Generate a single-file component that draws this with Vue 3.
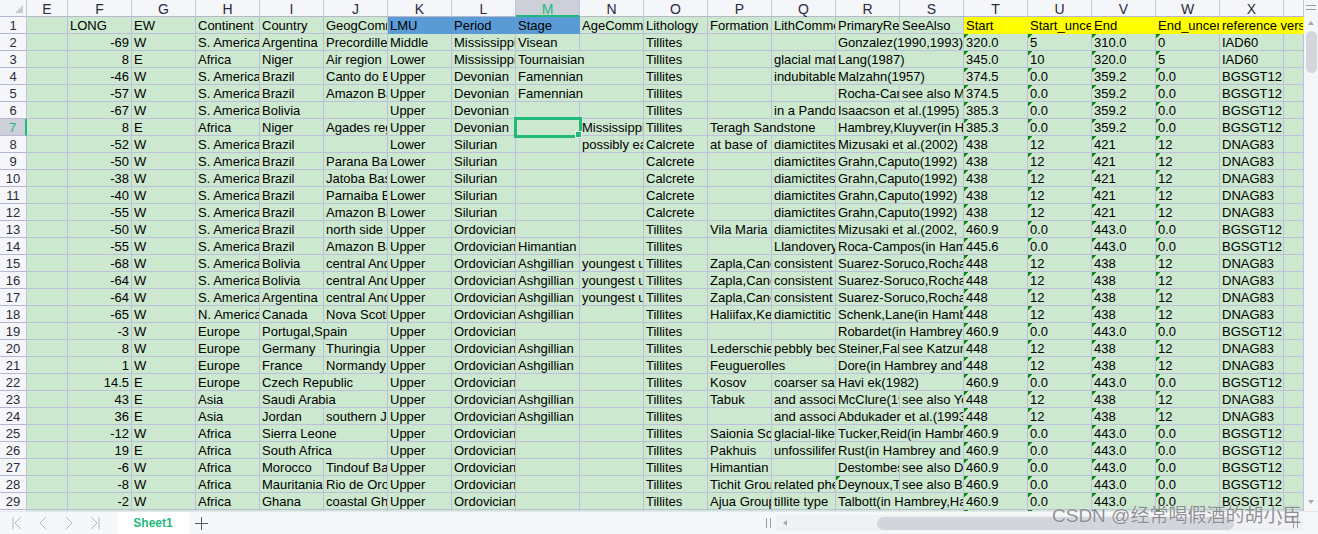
<script setup>
const letters = 'EFGHIJKLMNOPQRSTUVWX'.split('')

// F..X, a trailing > means the text runs on over the next (empty) cell
const data = [
  'LONG|EW|Continent|Country|GeogComments|LMU|Period|Stage|AgeComments|Lithology|Formation|LithComments|PrimaryRef|SeeAlso|Start|Start_uncertainty|End|End_uncertainty|reference version>',
  '-69|W|S. America|Argentina|Precordillera|Middle|Mississippian|Visean||Tillites|||Gonzalez(1990,1993)>||320.0|5|310.0|0|IAD60',
  '8|E|Africa|Niger|Air region|Lower|Mississippian|Tournaisian>||Tillites||glacial material|Lang(1987)>||345.0|10|320.0|5|IAD60',
  '-46|W|S. America|Brazil|Canto do Brasil|Upper|Devonian|Famennian>||Tillites||indubitable|Malzahn(1957)>||374.5|0.0|359.2|0.0|BGSGT12',
  '-57|W|S. America|Brazil|Amazon Basin|Upper|Devonian|Famennian>||Tillites|||Rocha-Campos|see also Martin|374.5|0.0|359.2|0.0|BGSGT12',
  '-67|W|S. America|Bolivia||Upper|Devonian|||Tillites||in a Pandora|Isaacson et al.(1995)>||385.3|0.0|359.2|0.0|BGSGT12',
  '8|E|Africa|Niger|Agades region|Upper|Devonian||Mississippian|Tillites|Teragh Sandstone>||Hambrey,Kluyver(in Hambrey)>||385.3|0.0|359.2|0.0|BGSGT12',
  '-52|W|S. America|Brazil||Lower|Silurian||possibly early|Calcrete|at base of|diamictites|Mizusaki et al.(2002)>||438|12|421|12|DNAG83',
  '-50|W|S. America|Brazil|Parana Basin|Lower|Silurian|||Calcrete||diamictites|Grahn,Caputo(1992)>||438|12|421|12|DNAG83',
  '-38|W|S. America|Brazil|Jatoba Basin|Lower|Silurian|||Calcrete||diamictites|Grahn,Caputo(1992)>||438|12|421|12|DNAG83',
  '-40|W|S. America|Brazil|Parnaiba Basin|Lower|Silurian|||Calcrete||diamictites|Grahn,Caputo(1992)>||438|12|421|12|DNAG83',
  '-55|W|S. America|Brazil|Amazon Basin|Lower|Silurian|||Calcrete||diamictites|Grahn,Caputo(1992)>||438|12|421|12|DNAG83',
  '-50|W|S. America|Brazil|north side of|Upper|Ordovician|||Tillites|Vila Maria|diamictites|Mizusaki et al.(2002,>||460.9|0.0|443.0|0.0|BGSGT12',
  '-55|W|S. America|Brazil|Amazon Basin|Upper|Ordovician|Himantian||Tillites||Llandovery|Roca-Campos(in Hambrey)>||445.6|0.0|443.0|0.0|BGSGT12',
  '-68|W|S. America|Bolivia|central Andes|Upper|Ordovician|Ashgillian|youngest unit|Tillites|Zapla,Cancaniri|consistent|Suarez-Soruco,Rocha>||448|12|438|12|DNAG83',
  '-64|W|S. America|Bolivia|central Andes|Upper|Ordovician|Ashgillian|youngest unit|Tillites|Zapla,Cancaniri|consistent|Suarez-Soruco,Rocha>||448|12|438|12|DNAG83',
  '-64|W|S. America|Argentina|central Andes|Upper|Ordovician|Ashgillian|youngest unit|Tillites|Zapla,Cancaniri|consistent|Suarez-Soruco,Rocha>||448|12|438|12|DNAG83',
  '-65|W|N. America|Canada|Nova Scotia|Upper|Ordovician|Ashgillian||Tillites|Haliifax,Kentville|diamictitic|Schenk,Lane(in Hambrey)>||448|12|438|12|DNAG83',
  '-3|W|Europe|Portugal,Spain>||Upper|Ordovician|||Tillites|||Robardet(in Hambrey and Harland)>||460.9|0.0|443.0|0.0|BGSGT12',
  '8|W|Europe|Germany|Thuringia|Upper|Ordovician|Ashgillian||Tillites|Lederschiefer|pebbly beds|Steiner,Falk|see Katzung|448|12|438|12|DNAG83',
  '1|W|Europe|France|Normandy|Upper|Ordovician|Ashgillian||Tillites|Feuguerolles>||Dore(in Hambrey and Harland)>||448|12|438|12|DNAG83',
  '14.5|E|Europe|Czech Republic>||Upper|Ordovician|||Tillites|Kosov|coarser sandstone|Havi ek(1982)>||460.9|0.0|443.0|0.0|BGSGT12',
  '43|E|Asia|Saudi Arabia>||Upper|Ordovician|Ashgillian||Tillites|Tabuk|and associated|McClure(1978)|see also Young|448|12|438|12|DNAG83',
  '36|E|Asia|Jordan|southern Jordan|Upper|Ordovician|Ashgillian||Tillites||and associated|Abdukader et al.(1993)>||448|12|438|12|DNAG83',
  '-12|W|Africa|Sierra Leone>||Upper|Ordovician|||Tillites|Saionia Scarp|glacial-like|Tucker,Reid(in Hambrey)>||460.9|0.0|443.0|0.0|BGSGT12',
  '19|E|Africa|South Africa>||Upper|Ordovician|||Tillites|Pakhuis|unfossiliferous|Rust(in Hambrey and Harland)>||460.9|0.0|443.0|0.0|BGSGT12',
  '-6|W|Africa|Morocco|Tindouf Basin|Upper|Ordovician|||Tillites|Himantian||Destombes|see also Deynoux|460.9|0.0|443.0|0.0|BGSGT12',
  '-8|W|Africa|Mauritania,|Rio de Oro|Upper|Ordovician|||Tillites|Tichit Group|related phenomena|Deynoux,Trompette|see also Biju|460.9|0.0|443.0|0.0|BGSGT12',
  '-2|W|Africa|Ghana|coastal Ghana|Upper|Ordovician|||Tillites|Ajua Group|tillite type|Talbott(in Hambrey,Harland)>||460.9|0.0|443.0|0.0|BGSGT12',
  '|||||||||||||||||||'
]

function cellClass(rowNum, col) {
  const cls = []
  if (col === 1 && rowNum > 1) cls.push('num')
  if (rowNum === 1 && col >= 6 && col <= 8) cls.push('blue')
  if (rowNum === 1 && col >= 15) cls.push('yellow')
  if (rowNum > 1 && col >= 15 && col <= 18) cls.push('flag')
  if (rowNum === 28 && col === 13) cls.push('flag')
  if (rowNum === 7 && col === 8) cls.push('selected')
  return cls
}

const rows = data.map((line, i) => {
  const num = i + 1
  const parts = ['', ...line.split('|')]
  while (parts.length < 21) parts.push('')
  const cells = []
  for (let col = 0; col < parts.length; col++) {
    let text = parts[col]
    let span = 1
    if (text.endsWith('>')) {
      text = text.slice(0, -1)
      span = 2
    }
    cells.push({ col, text, span, cls: cellClass(num, col) })
    col += span - 1
  }
  return { num, cells }
})
</script>

<template>
  <div class="app">
    <div class="main">
      <div class="sheet">
        <div class="corner"><span class="tri"></span></div>
        <div
          v-for="l in letters"
          :key="l"
          class="colhead"
          :class="{ active: l === 'M' }"
        >{{ l }}</div>
        <div class="colhead"></div>
        <template v-for="row in rows" :key="row.num">
          <div class="rowhead" :class="{ active: row.num === 7 }">{{ row.num }}</div>
          <div
            v-for="c in row.cells"
            :key="c.col"
            class="cell"
            :class="c.cls"
            :style="{ gridColumn: 'span ' + c.span }"
          >{{ c.text }}</div>
        </template>
      </div>
      <div class="vscroll">
        <div class="grip"></div>
        <div class="arrow-up"></div>
        <div class="vthumb"></div>
        <div class="arrow-down"></div>
      </div>
    </div>

    <div class="bar">
      <div class="nav">
        <svg width="12" height="14" viewBox="0 0 12 14"><path d="M2 1v12M10 1 4 7l6 6" /></svg>
        <svg width="12" height="14" viewBox="0 0 12 14"><path d="M9 1 3 7l6 6" /></svg>
        <svg width="12" height="14" viewBox="0 0 12 14"><path d="M3 1l6 6-6 6" /></svg>
        <svg width="12" height="14" viewBox="0 0 12 14"><path d="M2 1l6 6-6 6M10 1v12" /></svg>
      </div>
      <div class="tab">Sheet1</div>
      <svg class="plus" width="13" height="13" viewBox="0 0 13 13"><path d="M6.5 0v13M0 6.5h13" /></svg>
      <div class="split"></div>
      <div class="hscroll">
        <div class="arrow-left"></div>
        <div class="hthumb"></div>
        <div class="arrow-right"></div>
        <div class="split small"></div>
      </div>
    </div>

    <div class="watermark">CSDN @经常喝假酒的胡小臣</div>
  </div>
</template>

<style scoped>
.app {
  width: 1318px;
  height: 534px;
  overflow: hidden;
  position: relative;
  display: flex;
  flex-direction: column;
  font-family: "Liberation Sans", Arial, "Noto Sans CJK SC", sans-serif;
  background: #f5f6f8;
  color: #000;
}

.main {
  display: flex;
  height: 511px;
}

.sheet {
  width: 1304px;
  height: 511px;
  overflow: hidden;
  display: grid;
  grid-template-columns: 27px 41px repeat(19, 64px) 20px;
  grid-auto-rows: 17px;
  font-size: 13px;
  line-height: 18px;
}

.corner,
.colhead,
.rowhead {
  box-sizing: border-box;
  background: #f5f6f9;
  border-right: 1px solid #c3c5d8;
  border-bottom: 1px solid #b5b8cc;
  color: #2b2b3a;
  text-align: center;
}

.corner {
  display: flex;
  justify-content: flex-end;
  align-items: flex-end;
  padding: 0 3px 3px 0;
}

.tri {
  width: 0;
  height: 0;
  border-left: 8px solid transparent;
  border-bottom: 8px solid #c9cbd0;
}

.colhead {
  font-size: 14px;
}

.colhead.active {
  background: #cdd0d8;
  color: #1fb97c;
  border-bottom: 2px solid #1fb97c;
}

.rowhead.active {
  background: #cdd0d8;
  color: #1fb97c;
  border-right: 2px solid #1fb97c;
}

.cell {
  box-sizing: border-box;
  padding: 0 2px;
  background: #cce8cf;
  border-right: 1px solid #bcc0dc;
  border-bottom: 1px solid #bcc0dc;
  white-space: nowrap;
  overflow: hidden;
}

.num {
  text-align: right;
}

.blue {
  background: #5b9bd5;
  border-color: #5b9bd5;
}

.yellow {
  background: #ffff00;
  border-color: #ffff00;
}

.flag {
  background: linear-gradient(135deg, #0b8a0b 3.5px, transparent 3.5px), #cce8cf;
}

.selected {
  position: relative;
  overflow: visible;
  outline: 3px solid #1fb97c;
  outline-offset: -1px;
  z-index: 1;
}

.selected::after {
  content: "";
  position: absolute;
  right: -3px;
  bottom: -3px;
  width: 5px;
  height: 5px;
  background: #1fb97c;
  border: 1px solid #e8f5ea;
}

.vscroll {
  width: 14px;
  position: relative;
  background: #f5f6f8;
  display: flex;
  flex-direction: column;
  align-items: center;
}

.grip {
  width: 10px;
  height: 3px;
  margin-top: 5px;
  border-top: 1px solid #9a9ca8;
  border-bottom: 1px solid #9a9ca8;
}

.arrow-up,
.arrow-down {
  width: 0;
  height: 0;
  border-left: 3.5px solid transparent;
  border-right: 3.5px solid transparent;
}

.arrow-up {
  margin-top: 11px;
  border-bottom: 4px solid #a6a9b4;
}

.arrow-down {
  margin-top: auto;
  margin-bottom: 7px;
  border-top: 4px solid #a6a9b4;
}

.vthumb {
  width: 11px;
  height: 42px;
  margin-top: 6px;
  border-radius: 6px;
  background: #d3d5dd;
}

.bar {
  flex: 1;
  display: flex;
  align-items: flex-start;
  background: #f6f7f9;
  border-top: 1px solid #e6e7ec;
}

.nav {
  width: 117px;
  height: 22px;
  box-sizing: border-box;
  padding-left: 11px;
  display: flex;
  align-items: center;
  gap: 14px;
}

.nav path,
.plus path {
  fill: none;
  stroke: #b5b7c0;
  stroke-width: 1;
}

.plus path {
  stroke: #555a68;
}

.tab {
  width: 72px;
  height: 22px;
  background: #fff;
  color: #1fb97c;
  font-size: 12px;
  font-weight: bold;
  text-align: center;
  line-height: 22px;
}

.plus {
  margin: 5px 0 0 6px;
}

.split {
  width: 3px;
  height: 10px;
  margin: 6px 0 0 558px;
  border-left: 1px solid #9a9ca8;
  border-right: 1px solid #9a9ca8;
}

.hscroll {
  width: 527px;
  margin: 3px 0 0 5px;
  background: #f0f1f5;
  height: 16px;
  display: flex;
  align-items: center;
}

.arrow-left,
.arrow-right {
  width: 0;
  height: 0;
  border-top: 3.5px solid transparent;
  border-bottom: 3.5px solid transparent;
}

.arrow-left {
  margin-left: 7px;
  border-right: 4px solid #a6a9b4;
}

.hthumb {
  width: 357px;
  height: 13px;
  margin-left: 90px;
  border-radius: 7px;
  background: #d3d5dd;
}

.arrow-right {
  margin-left: 44px;
  border-left: 4px solid #a6a9b4;
}

.split.small {
  margin: 0 0 0 11px;
}

.watermark {
  position: absolute;
  left: 1052px;
  top: 505px;
  font-size: 19px;
  line-height: 22px;
  white-space: nowrap;
  color: rgba(105, 105, 110, 0.75);
  text-shadow: 0 0 1px #fff;
}
</style>
